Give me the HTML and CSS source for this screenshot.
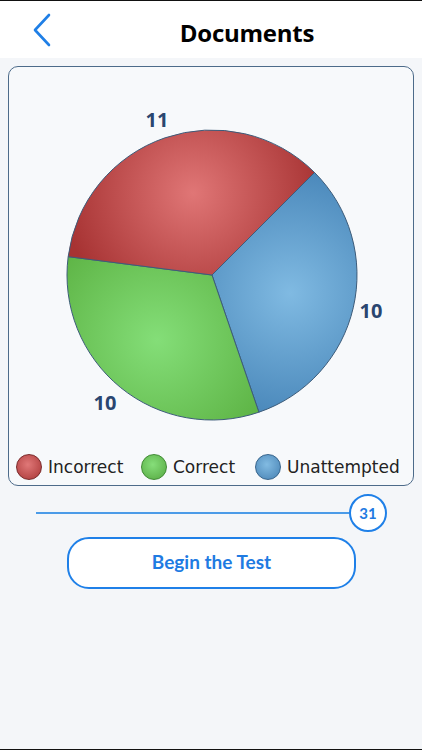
FILE: index.html
```html
<!DOCTYPE html>
<html lang="en">

<head>
	<meta charset="UTF-8">
	<meta name="viewport" content="width=device-width, initial-scale=1.0">
	<title>Documents</title>
	<link rel="stylesheet" href="styles.css">
</head>

<body>
	<!-- Header -->
	<div class="header">
		<svg class="back" width="20" height="34" viewBox="0 0 20 34">
			<polyline points="16,2 2,17 16,32" fill="none" stroke="#1f7fe6" stroke-width="2.6" stroke-linecap="round" stroke-linejoin="round" />
		</svg>
		<h1 class="title">Documents</h1>
	</div>

	<!-- Chart card -->
	<div class="card">
		<svg class="pie" width="404" height="381" viewBox="0 0 404 381">
			<defs>
				<radialGradient id="gRed" gradientUnits="userSpaceOnUse" cx="184" cy="126" r="130">
					<stop offset="0" stop-color="#e07676" />
					<stop offset="1" stop-color="#a73333" />
				</radialGradient>
				<radialGradient id="gGreen" gradientUnits="userSpaceOnUse" cx="148" cy="273" r="130">
					<stop offset="0" stop-color="#84de78" />
					<stop offset="1" stop-color="#5cb243" />
				</radialGradient>
				<radialGradient id="gBlue" gradientUnits="userSpaceOnUse" cx="281" cy="226" r="130">
					<stop offset="0" stop-color="#80bae2" />
					<stop offset="1" stop-color="#4886b9" />
				</radialGradient>
			</defs>
			<path d="M203,208 L305.53,105.47 A145,145 0 0 1 249.89,345.21 Z" fill="url(#gBlue)" stroke="#3d5c7a" stroke-width="1" />
			<path d="M203,208 L249.89,345.21 A145,145 0 0 1 59.16,189.67 Z" fill="url(#gGreen)" stroke="#3d5c7a" stroke-width="1" />
			<path d="M203,208 L59.16,189.67 A145,145 0 0 1 305.53,105.47 Z" fill="url(#gRed)" stroke="#3d5c7a" stroke-width="1" />
			<text class="pie-label" x="148" y="60" text-anchor="middle">11</text>
			<text class="pie-label" x="362" y="251" text-anchor="middle">10</text>
			<text class="pie-label" x="96" y="343" text-anchor="middle">10</text>
		</svg>

		<div class="legend">
			<div class="legend-item item-incorrect">
				<span class="dot dot-red"></span>
				<span>Incorrect</span>
			</div>
			<div class="legend-item item-correct">
				<span class="dot dot-green"></span>
				<span>Correct</span>
			</div>
			<div class="legend-item">
				<span class="dot dot-blue"></span>
				<span>Unattempted</span>
			</div>
		</div>
	</div>

	<!-- Question count slider -->
	<div class="slider">
		<div class="track"></div>
		<div class="thumb">31</div>
	</div>

	<button class="begin">Begin the Test</button>
</body>

</html>
```

FILE: styles.css
```css
body {
	margin: 0;
	padding: 0;
	width: 422px;
	height: 750px;
	box-sizing: border-box;
	background-color: #f4f6f9;
	border-top: 1px solid #111;
	border-bottom: 1px solid #111;
	font-family: Lato, sans-serif;
	overflow: hidden;
}

/* Header */
.header {
	height: 57px;
	background-color: white;
	display: flex;
	align-items: center;
	position: relative;
}

.back {
	position: absolute;
	left: 33px;
	top: 12px;
}

.title {
	flex: 1;
	margin: 0;
	padding-left: 72px;
	padding-top: 6px;
	text-align: center;
	font-family: "Open Sans", sans-serif;
	font-size: 24px;
	font-weight: 700;
	color: #000;
	letter-spacing: -0.01em;
}

/* Card */
.card {
	margin: 8px 8px 0;
	height: 420px;
	box-sizing: border-box;
	border: 1.5px solid #4d6b8a;
	border-radius: 10px;
	background-color: #f7f9fb;
	display: flex;
	flex-direction: column;
}

.pie {
	display: block;
}

.pie-label {
	font-family: "Open Sans", sans-serif;
	font-size: 20px;
	font-weight: 700;
	fill: #2a4670;
}

.legend {
	display: flex;
	align-items: center;
	padding-left: 7px;
	margin-top: 6px;
}

.legend-item {
	display: flex;
	align-items: center;
	gap: 6px;
	font-family: "DejaVu Sans", sans-serif;
	font-size: 17px;
	color: #222;
}

.item-incorrect {
	width: 125px;
}

.item-correct {
	width: 114px;
}

.dot {
	width: 26px;
	height: 26px;
	border-radius: 50%;
	box-sizing: border-box;
	display: inline-block;
}

.dot-red {
	background: radial-gradient(circle at 45% 40%, #e07878, #a83535);
	border: 1px solid #7a2a2a;
}

.dot-green {
	background: radial-gradient(circle at 45% 40%, #86de7a, #55a840);
	border: 1px solid #3f8a33;
}

.dot-blue {
	background: radial-gradient(circle at 45% 40%, #82bbe2, #4681b3);
	border: 1px solid #36648c;
}

/* Slider */
.slider {
	display: flex;
	align-items: center;
	margin-top: 8px;
	padding-left: 36px;
	padding-right: 35px;
	height: 38px;
}

.track {
	flex: 1;
	height: 2px;
	background-color: #4b9be8;
}

.thumb {
	width: 38px;
	height: 38px;
	box-sizing: border-box;
	border: 2.5px solid #1f80e8;
	border-radius: 50%;
	background-color: white;
	display: flex;
	align-items: center;
	justify-content: center;
	font-size: 15px;
	font-weight: 700;
	color: #1f7be2;
}

/* Button */
.begin {
	display: block;
	margin: 5px 0 0 67px;
	width: 289px;
	height: 52px;
	box-sizing: border-box;
	border: 2.5px solid #1f80e8;
	border-radius: 22px;
	background-color: white;
	font-family: Lato, sans-serif;
	font-size: 19px;
	font-weight: 700;
	color: #1f7be2;
	padding-bottom: 4px;
	cursor: pointer;
}
```
